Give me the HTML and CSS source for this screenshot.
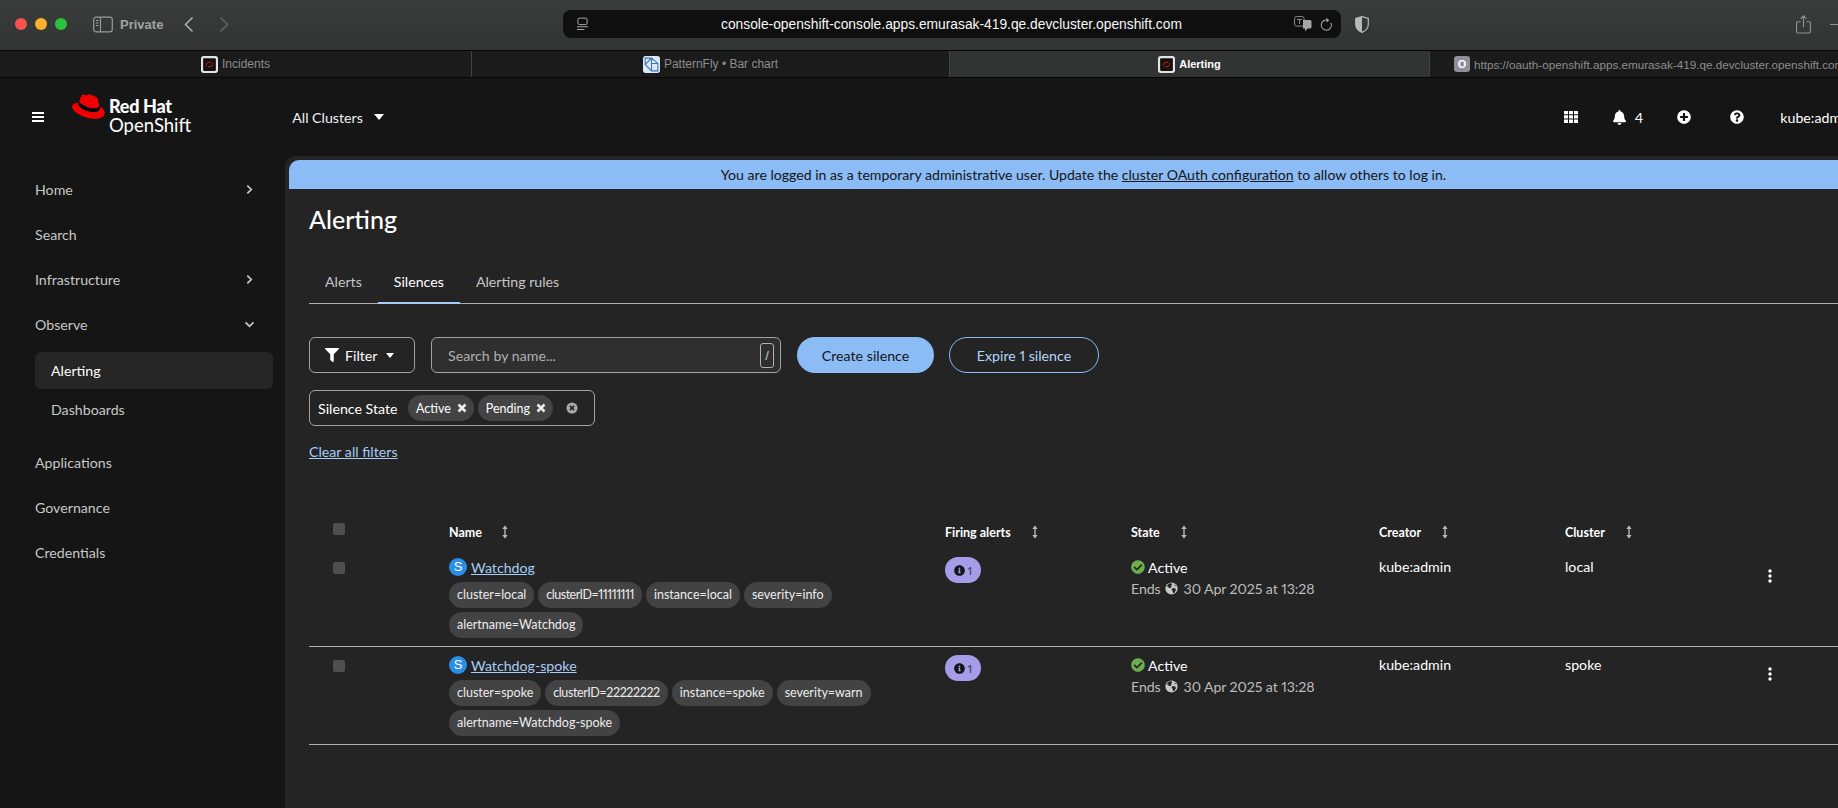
FILE: index.html
```html
<!DOCTYPE html>
<html lang="en">
<head>
<meta charset="utf-8">
<title>Alerting</title>
<link rel="stylesheet" href="styles.css">
</head>
<body>
<svg class="defs" width="0" height="0" aria-hidden="true">
  <symbol id="i-sort" viewBox="0 0 8 14"><path d="M4 1.500v11" stroke="currentColor" stroke-width="1.400" fill="none"/><path d="M1.300 4 4 .6 6.700 4zM1.300 10 4 13.400 6.700 10z" fill="currentColor"/></symbol>
  <symbol id="i-check" viewBox="0 0 512 512"><path fill="currentColor" d="M504 256c0 136.967-111.033 248-248 248S8 392.967 8 256 119.033 8 256 8s248 111.033 248 248zM227.314 387.314l184-184c6.248-6.248 6.248-16.379 0-22.627l-22.627-22.627c-6.248-6.249-16.379-6.249-22.628 0L216 308.118l-70.059-70.059c-6.248-6.248-16.379-6.248-22.628 0l-22.627 22.627c-6.248 6.248-6.248 16.379 0 22.627l104 104c6.249 6.249 16.379 6.249 22.628.001z"/></symbol>
  <symbol id="i-info" viewBox="0 0 512 512"><path fill="currentColor" d="M256 8C119.043 8 8 119.083 8 256c0 136.997 111.043 248 248 248s248-111.003 248-248C504 119.083 392.957 8 256 8zm0 110c23.196 0 42 18.804 42 42s-18.804 42-42 42-42-18.804-42-42 18.804-42 42-42zm56 254c0 6.627-5.373 12-12 12h-88c-6.627 0-12-5.373-12-12v-24c0-6.627 5.373-12 12-12h12v-64h-12c-6.627 0-12-5.373-12-12v-24c0-6.627 5.373-12 12-12h64c6.627 0 12 5.373 12 12v100h12c6.627 0 12 5.373 12 12v24z"/></symbol>
  <symbol id="i-globe" viewBox="0 0 16 16"><circle cx="8" cy="8" r="7.500" fill="currentColor"/><path fill="#242424" d="M5 1.800 8 1.500l1 1.600-1.600 1.400.8 1.500-2 1.600-1.800-.7L2.300 5zM9.500 7.500l3.300.6.6 2-2 3.400-1.400.3-.8-3-1.200-1.500zM12 2.800l1.500 2-1.600.4z"/></symbol>
  <symbol id="i-kebab" viewBox="0 0 4 14"><circle cx="2" cy="2" r="1.700" fill="currentColor"/><circle cx="2" cy="7" r="1.700" fill="currentColor"/><circle cx="2" cy="12" r="1.700" fill="currentColor"/></symbol>
  <symbol id="i-x" viewBox="0 0 10 10"><path d="M1.500 1.500l7 7m0-7-7 7" stroke="currentColor" stroke-width="2.500" fill="none"/></symbol>
  <symbol id="i-favicon" viewBox="0 0 16 16"><rect width="16" height="16" rx="2.500" fill="#e4e4e4"/><rect x="2" y="2" width="12" height="12" rx="1" fill="#111"/><path d="M5 9.500a3 3 0 0 1 4.800-3M11 6.500a3 3 0 0 1-4.800 3" stroke="#a01818" stroke-width="1" fill="none"/></symbol>
</svg>

<header class="chrome">
  <div class="lights"><span class="light red"></span><span class="light amber"></span><span class="light green"></span></div>
  <svg class="sidebar-toggle" viewBox="0 0 20 16"><rect x=".7" y=".7" width="18.600" height="14.600" rx="2.400" fill="none" stroke="#9a9c9c" stroke-width="1.200"/><path d="M7.500 1v14M3 4h2.500M3 6.500h2.500M3 9h2.500" stroke="#9a9c9c" stroke-width="1.100" fill="none"/></svg>
  <span class="private">Private</span>
  <svg class="nav-back" viewBox="0 0 10 16"><path d="M8.500 1 1.500 8l7 7" stroke="#b0b2b2" stroke-width="1.500" fill="none"/></svg>
  <svg class="nav-forward" viewBox="0 0 10 16"><path d="M1.500 1l7 7-7 7" stroke="#646666" stroke-width="1.500" fill="none"/></svg>
  <div class="url-bar">
    <svg class="reader" viewBox="0 0 12 14"><rect x="1" y=".6" width="10" height="7" rx="1.500" fill="none" stroke="#b5b5b5"/><path d="M0 10h12M0 13h8" stroke="#b5b5b5" fill="none"/></svg>
    <span class="url-text">console-openshift-console.apps.emurasak-419.qe.devcluster.openshift.com</span>
    <svg class="translate" viewBox="0 0 18 16"><rect x=".6" y=".6" width="9.500" height="9.500" rx="2" fill="none" stroke="#8b8b8b"/><path d="M3 3.500h5M5.500 3v5" stroke="#8b8b8b" fill="none"/><path d="M9 4h7a1.500 1.500 0 0 1 1.500 1.500V11A1.500 1.500 0 0 1 16 12.500h-2.500L11 15.500V12.500H9z" fill="#a5a5a5"/></svg>
    <svg class="reload" viewBox="0 0 14 16"><path d="M11.700 6a5.500 5.500 0 1 1-3-2.600" stroke="#a5a5a5" stroke-width="1.100" fill="none"/><path d="M7 .6l3 2.800-3 2.500z" fill="#a5a5a5"/></svg>
  </div>
  <svg class="shield" viewBox="0 0 14 17"><path d="M7 .6 13.300 2.500v5.500C13.300 12 10.500 15 7 16.400 3.500 15 .7 12 .7 8V2.500z" fill="none" stroke="#b8baba" stroke-width="1.200"/><path d="M7 .6 .7 2.500V8c0 4 2.800 7 6.300 8.400z" fill="#b8baba"/></svg>
  <div class="chrome-end">
    <svg class="share" viewBox="0 0 16 20"><path d="M5 7H1.500A1 1 0 0 0 .6 8v10a1 1 0 0 0 .9 1h13a1 1 0 0 0 .9-1V8a1 1 0 0 0-.9-1H11M8 13V1M4.800 4 8 .8 11.200 4" stroke="#8f9191" stroke-width="1.200" fill="none"/></svg>
    <span class="new-tab"></span>
  </div>
</header>

<nav class="tabstrip">
  <div class="btab"><svg class="fav"><use href="#i-favicon"/></svg><span>Incidents</span></div>
  <div class="btab"><svg class="fav" viewBox="0 0 16 16"><rect width="16" height="16" rx="2.500" fill="#dfe8f4"/><path d="M2 2h6l6 5v7H8L2 8zM2 8l6-6M8 2v12M8 7h6" stroke="#3b76c4" stroke-width="1" fill="none"/></svg><span>PatternFly • Bar chart</span></div>
  <div class="btab btab-active"><svg class="fav"><use href="#i-favicon"/></svg><span>Alerting</span></div>
  <div class="btab btab-last"><span class="fav-o">O</span><span>https://oauth-openshift.apps.emurasak-419.qe.devcluster.openshift.com</span></div>
</nav>

<header class="masthead">
  <div class="hamburger"><i></i><i></i><i></i></div>
  <div class="brand">
    <svg class="hat" viewBox="0 0 192 145"><path fill="#e00" d="M127.470 83.490c12.510 0 30.610-2.580 30.610-17.460a14 14 0 0 0-.31-3.420l-7.450-32.360c-1.720-7.120-3.230-10.350-15.730-16.600C124.890 8.690 103.760.5 97.510.5 91.690.5 90 8 83.060 8c-6.680 0-11.640-5.600-17.890-5.600-6 0-9.910 4.090-12.930 12.500 0 0-8.410 23.720-9.490 27.160A6.430 6.430 0 0 0 42.530 44c0 9.220 36.300 39.450 84.940 39.450M160 72.070c1.730 8.190 1.730 9.050 1.730 10.130 0 14-15.740 21.770-36.430 21.770C78.540 104 37.580 76.600 37.580 58.490a18.450 18.450 0 0 1 1.510-7.330C22.270 52 .5 55 .5 74.220c0 31.480 74.590 70.280 133.650 70.280 45.280 0 56.700-20.480 56.700-36.650 0-12.720-11-27.160-30.830-35.780"/><path fill="#000" d="M160 72.070c1.730 8.190 1.730 9.050 1.730 10.130 0 14-15.740 21.770-36.430 21.770C78.540 104 37.580 76.600 37.580 58.490a18.450 18.450 0 0 1 1.510-7.330l3.660-9.060A6.430 6.430 0 0 0 42.530 44c0 9.220 36.300 39.450 84.940 39.450 12.510 0 30.610-2.580 30.610-17.460a14 14 0 0 0-.31-3.420z"/></svg>
    <div class="brand-text"><span class="brand-rh">Red Hat</span><span class="brand-os">OpenShift</span></div>
  </div>
  <div class="cluster-select"><span>All Clusters</span><i class="caret"></i></div>
  <div class="mast-tools">
    <svg class="tool-grid" viewBox="0 0 14 12"><path fill="#fff" d="M0 0h4v3.300H0zM5 0h4v3.300H5zM10 0h4v3.300h-4zM0 4.300h4v3.300H0zM5 4.300h4v3.300H5zM10 4.300h4v3.300h-4zM0 8.600h4V12H0zM5 8.600h4V12H5zM10 8.600h4V12h-4z"/></svg>
    <span class="tool-bell"><svg viewBox="0 0 448 512"><path fill="#fff" d="M224 512c35.320 0 63.970-28.650 63.970-64H160.030c0 35.350 28.650 64 63.970 64zm215.390-149.710c-19.320-20.760-55.470-51.990-55.470-154.290 0-77.700-54.480-139.900-127.940-155.160V32c0-17.670-14.320-32-31.980-32s-31.980 14.330-31.980 32v20.840C118.560 68.100 64.080 130.300 64.080 208c0 102.300-36.150 133.530-55.470 154.290-6 6.450-8.660 14.160-8.610 21.710.11 16.400 12.980 32 32.100 32h383.800c19.120 0 32-15.600 32.100-32 .05-7.550-2.610-15.270-8.610-21.710z"/></svg><b>4</b></span>
    <svg class="tool-circle tool-plus" viewBox="0 0 512 512"><path fill="#fff" d="M256 8C119 8 8 119 8 256s111 248 248 248 248-111 248-248S393 8 256 8zm144 276c0 6.600-5.400 12-12 12h-92v92c0 6.600-5.400 12-12 12h-56c-6.600 0-12-5.400-12-12v-92h-92c-6.600 0-12-5.400-12-12v-56c0-6.600 5.400-12 12-12h92v-92c0-6.600 5.400-12 12-12h56c6.600 0 12 5.400 12 12v92h92c6.600 0 12 5.400 12 12v56z"/></svg>
    <svg class="tool-circle tool-help" viewBox="0 0 512 512"><path fill="#fff" d="M504 256c0 136.997-111.043 248-248 248S8 392.997 8 256C8 119.083 119.043 8 256 8s248 111.083 248 248zM262.655 90c-54.497 0-89.255 22.957-116.549 63.758-3.536 5.286-2.353 12.415 2.715 16.258l34.699 26.310c5.205 3.947 12.621 3.008 16.665-2.122 17.864-22.658 30.113-35.797 57.303-35.797 20.429 0 45.698 13.148 45.698 32.958 0 14.976-12.363 22.667-32.534 33.976C247.128 238.528 216 254.941 216 296v4c0 6.627 5.373 12 12 12h56c6.627 0 12-5.373 12-12v-1.333c0-28.462 83.186-29.647 83.186-106.667 0-58.002-60.165-102-116.531-102zM256 338c-25.365 0-46 20.635-46 46 0 25.364 20.635 46 46 46s46-20.636 46-46c0-25.365-20.635-46-46-46z"/></svg>
    <span class="tool-user">kube:admin</span>
  </div>
</header>

<div class="shell">
  <aside class="sidenav">
    <div class="nav-item"><span>Home</span><svg class="chev" viewBox="0 0 8 12"><path d="M1.500 1.500 6 6l-4.500 4.500" stroke="currentColor" stroke-width="2" fill="none"/></svg></div>
    <div class="nav-item"><span>Search</span></div>
    <div class="nav-item"><span>Infrastructure</span><svg class="chev" viewBox="0 0 8 12"><path d="M1.500 1.500 6 6l-4.500 4.500" stroke="currentColor" stroke-width="2" fill="none"/></svg></div>
    <div class="nav-item"><span>Observe</span><svg class="chev chev-down" viewBox="0 0 12 8"><path d="M1.500 1.500 6 6l4.500-4.500" stroke="currentColor" stroke-width="2" fill="none"/></svg></div>
    <div class="nav-sub nav-sub-active">Alerting</div>
    <div class="nav-sub">Dashboards</div>
    <div class="nav-item nav-gap"><span>Applications</span></div>
    <div class="nav-item"><span>Governance</span></div>
    <div class="nav-item"><span>Credentials</span></div>
  </aside>

  <main class="content">
    <div class="banner">You are logged in as a temporary administrative user. Update the <u>cluster OAuth configuration</u> to allow others to log in.</div>
    <h1 class="page-title">Alerting</h1>
    <div class="page-tabs">
      <span class="page-tab">Alerts</span>
      <span class="page-tab page-tab-on">Silences</span>
      <span class="page-tab">Alerting rules</span>
    </div>
    <div class="toolbar">
      <button class="filter-btn"><svg viewBox="0 0 512 512"><path fill="#fff" d="M487.976 0H24.028C2.710 0-8.047 25.866 7.058 40.971L192 225.941V432c0 7.831 3.821 15.170 10.237 20.063l80 55.980C298.020 518.690 320 507.493 320 487.980V225.941l184.947-184.970C520.021 25.896 509.338 0 487.976 0z"/></svg>Filter<i class="caret caret-sm"></i></button>
      <div class="search"><span>Search by name...</span><kbd>/</kbd></div>
      <button class="btn-primary">Create silence</button>
      <button class="btn-secondary">Expire 1 silence</button>
    </div>
    <div class="chipgroup">
      <span class="chipgroup-label">Silence State</span>
      <span class="chip">Active<svg><use href="#i-x"/></svg></span>
      <span class="chip">Pending<svg><use href="#i-x"/></svg></span>
      <svg class="chip-clear" viewBox="0 0 14 14"><circle cx="7" cy="7" r="6.500" fill="#a8a8a8"/><path d="M4.500 4.500l5 5m0-5-5 5" stroke="#242424" stroke-width="1.800"/></svg>
    </div>
    <a class="clear-all">Clear all filters</a>

    <div class="table">
      <div class="t-row t-head">
        <div><span class="check"></span></div>
        <div class="th">Name<svg class="sort sort-name"><use href="#i-sort"/></svg></div>
        <div class="th">Firing alerts<svg class="sort"><use href="#i-sort"/></svg></div>
        <div class="th">State<svg class="sort"><use href="#i-sort"/></svg></div>
        <div class="th">Creator<svg class="sort"><use href="#i-sort"/></svg></div>
        <div class="th">Cluster<svg class="sort"><use href="#i-sort"/></svg></div>
        <div></div>
      </div>

      <div class="t-row t-body">
        <div><span class="check"></span></div>
        <div>
          <div class="silence-name"><span class="s-badge">S</span><a>Watchdog</a></div>
          <div class="labels">
            <span class="label">cluster=local</span><span class="label label-id1">clusterID=11111111</span><span class="label">instance=local</span><span class="label">severity=info</span><span class="label">alertname=Watchdog</span>
          </div>
        </div>
        <div><span class="firing"><svg><use href="#i-info"/></svg>1</span></div>
        <div>
          <div class="state"><svg><use href="#i-check"/></svg>Active</div>
          <div class="ends">Ends<svg><use href="#i-globe"/></svg>30 Apr 2025 at 13:28</div>
        </div>
        <div class="cell">kube:admin</div>
        <div class="cell">local</div>
        <div class="kebab"><svg><use href="#i-kebab"/></svg></div>
      </div>

      <div class="t-row t-body">
        <div><span class="check"></span></div>
        <div>
          <div class="silence-name"><span class="s-badge">S</span><a>Watchdog-spoke</a></div>
          <div class="labels">
            <span class="label">cluster=spoke</span><span class="label label-id2">clusterID=22222222</span><span class="label">instance=spoke</span><span class="label">severity=warn</span><span class="label">alertname=Watchdog-spoke</span>
          </div>
        </div>
        <div><span class="firing"><svg><use href="#i-info"/></svg>1</span></div>
        <div>
          <div class="state"><svg><use href="#i-check"/></svg>Active</div>
          <div class="ends">Ends<svg><use href="#i-globe"/></svg>30 Apr 2025 at 13:28</div>
        </div>
        <div class="cell">kube:admin</div>
        <div class="cell">spoke</div>
        <div class="kebab"><svg><use href="#i-kebab"/></svg></div>
      </div>
    </div>
  </main>
</div>
</body>
</html>
```
FILE: styles.css
```css
* { box-sizing: border-box; }
html, body { margin: 0; height: 808px; overflow: hidden; }
body {
  width: 1838px;
  background: #151515;
  color: #fff;
  font-family: Lato, "Noto Sans", sans-serif;
  font-size: 14.200px;
  font-variant-numeric: proportional-nums;
  display: flex;
  flex-direction: column;
}
.defs { position: absolute; }
svg { display: block; flex: none; }
button { font: inherit; cursor: pointer; }

/* browser toolbar */
.chrome {
  height: 50px;
  flex: none;
  display: flex;
  align-items: center;
  padding: 0 0 2px 15px;
  background: linear-gradient(#3b3c3c, #323434);
}
.lights { display: flex; gap: 8px; }
.light { width: 12px; height: 12px; border-radius: 50%; }
.red { background: #f5544d; }
.amber { background: #fbb12e; }
.green { background: #29c23f; }
.sidebar-toggle { width: 20px; height: 17px; margin-left: 26px; }
.private { margin-left: 7px; width: 45px; color: #a1a3a3; font: 600 13px "Liberation Sans", sans-serif; white-space: nowrap; }
.nav-back { width: 10px; height: 17px; margin-left: 19px; }
.nav-forward { width: 10px; height: 17px; margin-left: 25px; }
.url-bar {
  width: 778px;
  height: 28px;
  margin-left: 334px;
  padding: 0 8px 0 14px;
  display: flex;
  align-items: center;
  border-radius: 8px;
  background: #0f0f0f;
}
.reader { width: 11px; height: 14px; }
.url-text { margin-left: 133px; width: 461px; font: 400 13.800px "Liberation Sans", sans-serif; white-space: nowrap; color: #f7f7f7; }
.translate { width: 18px; height: 16px; margin-left: 112px; }
.reload { width: 13px; height: 15px; margin-left: 8px; }
.shield { width: 14px; height: 17px; margin-left: 14px; }
.chrome-end { margin-left: auto; display: flex; align-items: center; }
.share { width: 15px; height: 19px; margin-right: 19px; }
.new-tab { width: 8px; height: 1px; background: #8f9191; }

/* browser tabs */
.tabstrip {
  height: 28px;
  flex: none;
  display: grid;
  grid-template-columns: 472px 478px 480px 1fr;
  border-top: 1px solid #050505;
  border-bottom: 1px solid #050505;
  background: #1b1b1b;
  font: 12px "Liberation Sans", sans-serif;
  color: #8d8d8d;
}
.btab {
  display: flex;
  align-items: center;
  justify-content: center;
  gap: 4px;
  min-width: 0;
  border-right: 1px solid #444;
  overflow: hidden;
  white-space: nowrap;
}
.btab-active { background: #323434; color: #fff; font-weight: 600; font-size: 11px; }
.btab-last { justify-content: flex-start; padding-left: 24px; border-right: 0; font-size: 11.700px; }
.fav { width: 17px; height: 17px; }
.fav-o {
  flex: none;
  width: 16px;
  height: 16px;
  border-radius: 3px;
  background: #8e8f9a;
  color: #fff;
  font-weight: 700;
  font-size: 11px;
  line-height: 17px;
  text-align: center;
}

/* masthead */
.masthead {
  height: 78px;
  flex: none;
  display: flex;
  align-items: center;
  padding-left: 32px;
  background: #151515;
  overflow: hidden;
}
.hamburger { flex: none; width: 12px; display: flex; flex-direction: column; gap: 2px; }
.hamburger i { height: 2px; background: #fff; }
.brand { flex: none; display: flex; align-items: flex-start; margin: -5px 0 0 28px; }
.hat { width: 33px; height: 25px; }
.brand-text { display: flex; flex-direction: column; margin: 3px 0 0 4px; }
.brand-rh { font-size: 18px; font-weight: 900; line-height: 19px; letter-spacing: -.3px; }
.brand-os { font-size: 18.500px; line-height: 19px; }
.cluster-select { flex: none; display: flex; align-items: center; margin-left: 101px; white-space: nowrap; color: #f0f0f0; }
.caret { flex: none; width: 0; height: 0; margin-left: 11px; border: 5px solid transparent; border-top: 6px solid #fff; border-bottom: 0; }
.mast-tools { flex: none; margin-left: 1180px; display: flex; align-items: center; white-space: nowrap; }
.tool-grid { width: 14px; height: 12px; }
.tool-bell { display: flex; align-items: center; gap: 9px; margin-left: 35px; }
.tool-bell svg { width: 13px; height: 15px; }
.tool-bell b { font-weight: 400; }
.tool-circle { width: 14px; height: 14px; }
.tool-plus { margin-left: 34px; }
.tool-help { margin-left: 39px; }
.tool-user { margin-left: 36px; }

/* layout */
.shell { flex: 1; display: flex; min-height: 0; }
.sidenav { width: 285px; flex: none; padding-top: 11px; color: #c7c7c7; }
.nav-item {
  height: 45px;
  margin: 0 32px 0 35px;
  display: flex;
  align-items: center;
  justify-content: space-between;
}
.chev { width: 7px; height: 11px; }
.chev-down { width: 11px; height: 7px; margin-right: -2px; }
.nav-sub {
  height: 37px;
  margin: 0 12px 0 35px;
  padding-left: 16px;
  display: flex;
  align-items: center;
  border-radius: 6px;
}
.nav-sub-active { background: #262626; color: #fff; margin-top: 5px; }
.nav-sub + .nav-sub { margin-top: 2px; }
.nav-gap { margin-top: 12px; }

.content {
  flex: 1;
  min-width: 0;
  padding: 4px 0 0 4px;
  background: #242424;
  border-top-left-radius: 10px;
}
.banner {
  height: 29px;
  padding-left: 40px;
  line-height: 29px;
  text-align: center;
  background: #8bbcf5;
  color: #151515;
  font-size: 14.100px;
  border-top-left-radius: 10px;
}
.page-title { margin: 15px 0 0 20px; font-size: 25px; line-height: 30px; font-weight: 500; }
.page-tabs {
  margin: 30px 0 0 20px;
  height: 40px;
  display: flex;
  border-bottom: 1px solid #b0b0b0;
  color: #c7c7c7;
}
.page-tab { padding: 0 16px; line-height: 36px; }
.page-tab-on { color: #fff; border-bottom: 2px solid #a6cdf8; height: 40px; }

.toolbar { margin: 33px 0 0 20px; display: flex; align-items: stretch; height: 36px; }
.filter-btn {
  width: 106px;
  display: flex;
  align-items: center;
  padding: 0 0 0 15px;
  background: transparent;
  border: 1px solid #a3a3a3;
  border-radius: 6px;
  color: #fff;
}
.filter-btn svg { width: 14px; height: 14px; margin-right: 6px; }
.caret-sm { margin-left: 9px; border-width: 4px; border-top-width: 5px; border-bottom-width: 0; }
.search {
  width: 350px;
  margin-left: 16px;
  padding: 0 6px 0 16px;
  display: flex;
  align-items: center;
  justify-content: space-between;
  background: #2f2f2f;
  border: 1px solid #a3a3a3;
  border-radius: 6px;
  color: #b0b0b0;
}
.search kbd {
  width: 14px;
  height: 25px;
  border: 1px solid #b0b0b0;
  border-radius: 3px;
  font: 13px/23px "Liberation Sans", sans-serif;
  text-align: center;
  color: #d0d0d0;
}
.btn-primary {
  width: 137px;
  margin-left: 16px;
  background: #8bbcf5;
  border: 0;
  border-radius: 18px;
  color: #151515;
}
.btn-secondary {
  width: 150px;
  margin-left: 15px;
  background: transparent;
  border: 1px solid #8bbcf5;
  border-radius: 18px;
  color: #b4d5fa;
}

.chipgroup {
  width: 286px;
  height: 36px;
  margin: 17px 0 0 20px;
  padding-left: 8px;
  display: flex;
  align-items: center;
  border: 1px solid #a3a3a3;
  border-radius: 6px;
}
.chipgroup-label { width: 82px; white-space: nowrap; }
.chip {
  height: 26px;
  margin-left: 8px;
  padding: 0 7px 0 8px;
  display: flex;
  align-items: center;
  gap: 6px;
  border-radius: 13px;
  background: #434343;
  font-size: 12.500px;
}
.chip + .chip { margin-left: 4px; }
.chip svg { width: 10px; height: 10px; color: #eee; }
.chip-clear { width: 12px; height: 12px; margin-left: 13px; }
.clear-all {
  display: block;
  width: max-content;
  margin: 17px 0 0 20px;
  line-height: 18px;
  color: #a6cdf8;
  text-decoration: underline;
}

/* table */
.table { margin: 56px 0 0 20px; }
.t-row { display: grid; grid-template-columns: 140px 496px 186px 248px 186px 190px 1fr; }
.t-head { height: 32px; padding-bottom: 2px; align-items: center; }
.t-body { height: 98px; padding-top: 9px; border-bottom: 1px solid #b0b0b0; }
.t-head .check { margin-top: -6px; }
.check {
  display: block;
  width: 12px;
  height: 12px;
  margin: 0 0 0 24px;
  border-radius: 2px;
  background: #4f4f4f;
}
.t-body .check { margin-top: 4px; }
.th { display: flex; align-items: center; font-size: 12.500px; font-weight: 700; white-space: nowrap; }
.sort { width: 8px; height: 14px; margin-left: 20px; color: #b8b8b8; }
.sort-name { margin-left: 19px; }
.silence-name { display: flex; align-items: center; gap: 4px; height: 18px; }
.silence-name a { color: #a6cdf8; text-decoration: underline; }
.s-badge {
  width: 18px;
  height: 18px;
  border-radius: 50%;
  background: #2b8ee6;
  color: #fff;
  font: 13px/18px "Liberation Sans", sans-serif;
  text-align: center;
}
.labels { display: flex; flex-wrap: wrap; gap: 4px; margin-top: 6px; width: 480px; }
.label {
  height: 26px;
  padding: 0 8px;
  border-radius: 13px;
  background: #434343;
  font-size: 12.500px;
  line-height: 26px;
  white-space: nowrap;
  color: #ececec;
}
.label-id1 { letter-spacing: -.5px; }
.label-id2 { letter-spacing: -.4px; }
.firing {
  width: 36px;
  height: 26px;
  margin-top: -1px;
  display: flex;
  align-items: center;
  justify-content: center;
  gap: 3px;
  border-radius: 13px;
  background: #a79ce8;
  color: #3f3b57;
  font-size: 12px;
}
.firing svg { width: 11px; height: 11px; color: #151515; }
.state { display: flex; align-items: center; gap: 3px; height: 18px; }
.state svg { width: 14px; height: 14px; color: #6dae4f; }
.ends { display: flex; align-items: center; gap: 4px; margin-top: 3px; height: 18px; color: #bdbdbd; white-space: nowrap; letter-spacing: -.1px; }
.ends svg { width: 13px; height: 13px; color: #c8c8c8; margin-right: 2px; }
.cell { line-height: 18px; }
.kebab { padding: 11px 0 0 13px; }
.kebab svg { width: 4px; height: 14px; color: #fff; }
```
